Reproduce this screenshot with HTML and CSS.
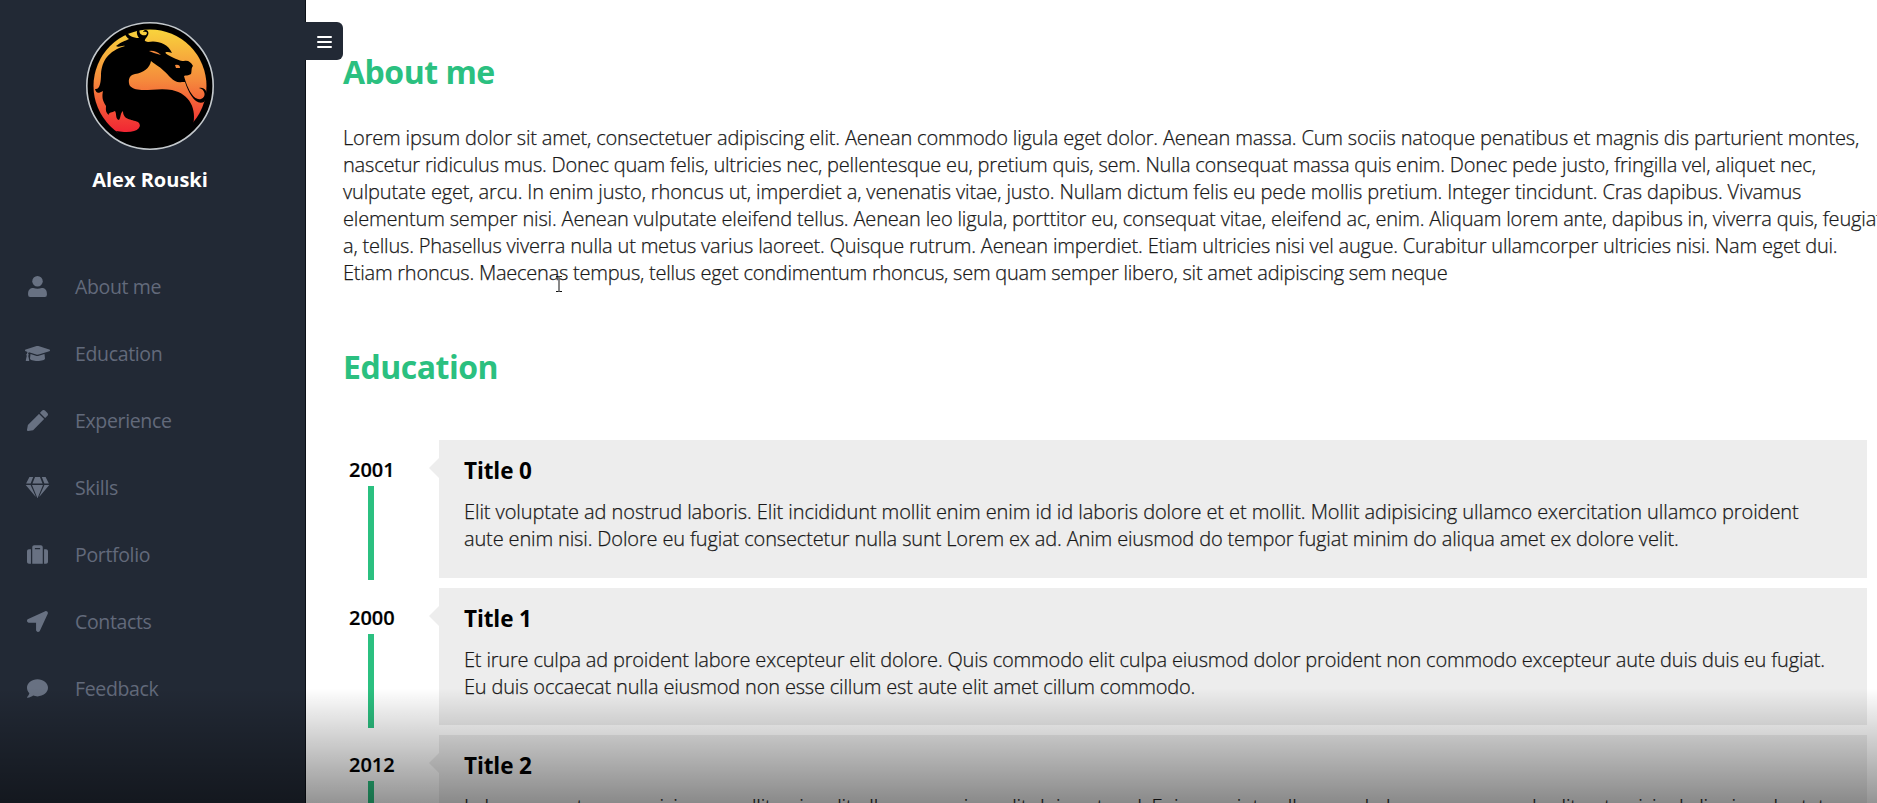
FILE: index.html
```html
<!DOCTYPE html>
<html lang="en">
<head>
<meta charset="utf-8">
<title>Alex Rouski</title>
<link rel="stylesheet" href="styles.css">
</head>
<body>
<div class="page">
  <aside class="sidebar">
    <div class="profile">
      <svg class="avatar" viewBox="0 0 128 128">
        <defs>
          <linearGradient id="fire" x1="0" y1="0" x2="0" y2="1">
            <stop offset="0" stop-color="#f8d43c"/>
            <stop offset=".45" stop-color="#f58a3c"/>
            <stop offset=".8" stop-color="#f23b35"/>
            <stop offset="1" stop-color="#f01432"/>
          </linearGradient>
        </defs>
        <circle cx="64" cy="64" r="63.2" fill="#000" stroke="#c3c8cc" stroke-width="1.6"/>
        <circle cx="64" cy="64" r="56.5" fill="url(#fire)"/>
        <path fill="#000" d="M30 24 C35 20 39 19 43 17 C39 14 38 11 40 8 C42 14 47 16 53 16 C50 12 50 8 54 6 C52 12 56 14 60 13 C62 11 61 9 57 10 C59 6 64 9 62 13 C60 17 56 19 62 20 C70 18 82 21 86 31 C80 29 77 30 82 33 C90 37 94 39 98 39 C102 38 105 40 107 44 C105 46 106 49 105 52 C102 54 100 53 98 54 C101 65 107 79 115 77 C121 75 119 67 113 66 C121 64 123 74 118 80 C110 84 103 72 99 60 L96 60 C88 62 83 53 78 49 C73 44 67 41 65 39 C64 46 57 51 49 52 C42 53 42 60 44 64 C52 72 70 65 86 68 C104 72 111 87 107 104 L114 99 Q96 124 64 122 Q40 120 30 109 L38 110 C52 111 57 104 52 100 C45 97 37 98 37 89 C34 91 35 96 33 98 C29 97 31 92 29 89 C24 91 22 91 23 93 C19 90 20 87 20 84 C16 78 16 74 17 69 C12 72 10 71 9 67 C14 68 15 60 15 52 C16 39 22 29 39 24 C36 23 33 26 30 24Z"/>
        <path fill="#f58a3c" d="M63 29 Q69 28 75 33 L68 31Z M89 43 Q94 42 94 46 L90 46Z"/>
      </svg>
      <div class="name">Alex Rouski</div>
    </div>
    <nav class="menu">
      <a class="item"><svg class="icon" viewBox="0 0 20 20"><circle cx="10" cy="5" r="5"/><path d="M1 17.500C1 13 3 11.500 6 11.500Q10 13 14 11.500C17 11.500 19 13 19 17.500Q19 20 17 20H3Q1 20 1 17.500Z"/></svg><span>About me</span></a>
      <a class="item"><svg class="icon wide" viewBox="0 0 640 512"><path d="M622 153 343 67c-15-5-31-5-46 0L18 153c-24 7-24 40 0 47l49 15c-11 13-17 29-18 47-10 6-17 16-17 28 0 11 6 20 14 26L20 430c-2 9 5 18 15 18h58c10 0 17-9 15-18L82 316c8-6 14-15 14-26 0-12-7-22-16-28 1-15 8-28 21-37l187 58c26 8 48 4 64 0l270-83c24-7 24-40 0-47zM352 313c-35 11-63 3-74 0l-137-42-13 113c0 35 86 64 192 64s192-29 192-64l-13-113z"/></svg><span>Education</span></a>
      <a class="item"><svg class="icon" viewBox="0 0 512 512"><path d="M498 142l-47 47c-5 5-12 5-17 0L323 78c-5-5-5-12 0-17l47-47c19-19 49-19 68 0l60 60c19 19 19 49 0 68zM284 101 22 363 0 484c-3 16 12 31 28 28l121-21 263-263c5-5 5-12 0-17L301 101c-5-5-12-5-17 0z"/></svg><span>Experience</span></a>
      <a class="item"><svg class="icon gem" viewBox="0 0 576 512"><path d="M485 0l81 160H456L393 0zM348 0l63 160H165L228 0zM91 0h92l-63 160H10zM0 192h119l124 279c2 4-3 7-6 4zm154 0h268L292 510c-1 3-7 3-8 0zm179 279 124-279h119L339 475c-3 3-8 0-6-4z"/></svg><span>Skills</span></a>
      <a class="item"><svg class="icon" viewBox="0 0 512 512"><path fill-rule="evenodd" d="M128 480h256V80c0-27-21-48-48-48H176c-27 0-48 21-48 48zm64-384h128v32H192zM512 176v256c0 27-21 48-48 48h-48V128h48c27 0 48 21 48 48zM96 480H48c-27 0-48-21-48-48V176c0-27 21-48 48-48h48z"/></svg><span>Portfolio</span></a>
      <a class="item"><svg class="icon" viewBox="0 0 512 512"><path d="M445 4 29 196c-48 22-32 92 16 92h176v176c0 48 70 64 93 16L506 64c16-38-26-76-61-60z"/></svg><span>Contacts</span></a>
      <a class="item"><svg class="icon" viewBox="0 0 512 512"><path d="M256 32C115 32 0 125 0 240c0 50 21 95 57 131-13 50-54 95-55 95-5 6-1 14 6 14 66 0 116-32 140-51 33 12 69 19 108 19 141 0 256-93 256-208S397 32 256 32z"/></svg><span>Feedback</span></a>
    </nav>
  </aside>
  <button class="toggle" aria-label="Menu"><i></i><i></i><i></i></button>
  <main class="content">
    <h1 class="heading">About me</h1>
    <p class="text about">
      <span class="l1">Lorem ipsum dolor sit amet, consectetuer adipiscing elit. Aenean commodo ligula eget dolor. Aenean massa. Cum sociis natoque penatibus et magnis dis parturient montes,</span><br>
      <span class="l2">nascetur ridiculus mus. Donec quam felis, ultricies nec, pellentesque eu, pretium quis, sem. Nulla consequat massa quis enim. Donec pede justo, fringilla vel, aliquet nec,</span><br>
      <span class="l3">vulputate eget, arcu. In enim justo, rhoncus ut, imperdiet a, venenatis vitae, justo. Nullam dictum felis eu pede mollis pretium. Integer tincidunt. Cras dapibus. Vivamus</span><br>
      <span class="l4">elementum semper nisi. Aenean vulputate eleifend tellus. Aenean leo ligula, porttitor eu, consequat vitae, eleifend ac, enim. Aliquam lorem ante, dapibus in, viverra quis, feugiat</span><br>
      <span class="l5">a, tellus. Phasellus viverra nulla ut metus varius laoreet. Quisque rutrum. Aenean imperdiet. Etiam ultricies nisi vel augue. Curabitur ullamcorper ultricies nisi. Nam eget dui.</span><br>
      <span class="l6">Etiam rhoncus. Maecenas tempus, tellus eget condimentum rhoncus, sem quam semper libero, sit amet adipiscing sem neque</span>
    </p>
    <h1 class="heading education">Education</h1>
    <section class="timeline">
      <div class="entry">
        <div class="when"><b>2001</b><i class="bar"></i></div>
        <article class="card"><h2>Title 0</h2><p class="text"><span class="c1">Elit voluptate ad nostrud laboris. Elit incididunt mollit enim enim id id laboris dolore et et mollit. Mollit adipisicing ullamco exercitation ullamco proident</span><br><span class="c2">aute enim nisi. Dolore eu fugiat consectetur nulla sunt Lorem ex ad. Anim eiusmod do tempor fugiat minim do aliqua amet ex dolore velit.</span></p></article>
      </div>
      <div class="entry">
        <div class="when"><b>2000</b><i class="bar"></i></div>
        <article class="card"><h2>Title 1</h2><p class="text"><span class="c3">Et irure culpa ad proident labore excepteur elit dolore. Quis commodo elit culpa eiusmod dolor proident non commodo excepteur aute duis duis eu fugiat.</span><br><span class="c4">Eu duis occaecat nulla eiusmod non esse cillum est aute elit amet cillum commodo.</span></p></article>
      </div>
      <div class="entry">
        <div class="when"><b>2012</b><i class="bar"></i></div>
        <article class="card"><h2>Title 2</h2><p class="text"><span class="c5">Labore esse tempor nisi non mollit enim elit ullamco veniam elit duis aute ad. Enim ea sint nulla esse do Lorem magna ad velit aute nisi ad aliquip voluptate</span></p></article>
      </div>
    </section>
  </main>
  <div class="shade"></div>
  <svg class="cursor" viewBox="0 0 8 18"><path d="M1 1.500H3.500L4 2 4.500 1.500H7M4 2V16M1 16.500H3.500L4 16 4.500 16.500H7"/></svg>
</div>
</body>
</html>
```
FILE: styles.css
```css
* { box-sizing: border-box; }
body { margin: 0; font-family: "Open Sans", "Noto Sans", sans-serif; color: #181818; background: #fff; }
.page { position: relative; display: flex; width: 1877px; height: 803px; overflow: hidden; }
.sidebar { flex: none; width: 306px; height: 803px; background: #222935; border-right: 1px solid #0b0f16; }
.profile { display: flex; flex-direction: column; align-items: center; width: 300px; padding-top: 22px; }
.avatar { width: 128px; height: 128px; display: block; }
.name { margin-top: 15px; font-size: 20px; line-height: 30px; font-weight: 700; color: #fff; }
.menu { padding: 58px 0 0 25px; }
.item { display: flex; align-items: center; height: 67px; gap: 25px; color: #626a7b; font-size: 19.5px; letter-spacing: -.35px; }
.item svg { flex: none; width: 25px; height: 21px; fill: #687182; }
.toggle { position: absolute; left: 305px; top: 22px; width: 38px; height: 38px; padding: 2px 11px 0 12px; border: 0; border-radius: 0 6px 6px 0; background: #222935; display: flex; flex-direction: column; justify-content: center; gap: 3px; }
.toggle i { height: 2px; width: 15px; background: #fff; border-radius: 1px; }
.content { flex: none; width: 1571px; padding: 48px 10px 0 37px; }
.heading { margin: 0; font-size: 32px; line-height: 48px; font-weight: 700; letter-spacing: -.5px; color: #2bc080; }
.text { margin: 0; font-size: 20px; line-height: 27px; font-weight: 300; white-space: nowrap; -webkit-text-stroke: .25px #181818; }
.l1 { letter-spacing: -.172px; }
.l2 { letter-spacing: -.197px; }
.l3 { letter-spacing: -.148px; }
.l4 { letter-spacing: -.163px; }
.l5 { letter-spacing: -.195px; }
.l6 { letter-spacing: -.235px; }
.c1 { letter-spacing: -.08px; }
.c2 { letter-spacing: -.14px; }
.c3, .c4 { letter-spacing: -.18px; }
.c5 { letter-spacing: -.12px; }
.about { margin-top: 28px; }
.education { margin-top: 57px; }
.timeline { display: flex; flex-direction: column; gap: 10px; margin-top: 49px; }
.entry { display: flex; height: 137.6px; }
.when { width: 96px; padding: 17px 0 0 6px; }
.when b { display: block; font-size: 20px; line-height: 26px; font-weight: 600; color: #000; -webkit-text-stroke: .2px #000; }
.bar { display: block; width: 6px; height: 94px; margin: 3px 0 0 19px; background: #2bc080; }
.card { position: relative; width: 1428px; padding: 17px 0 0 25px; background: #ededed; }
.card::before { content: ""; position: absolute; left: -10px; top: 18px; border: 10px solid transparent; border-left: 0; border-right-color: #ededed; }
.card h2 { margin: 0 0 13px; font-size: 22.5px; line-height: 28px; font-weight: 700; letter-spacing: -.1px; color: #000; }
.shade { position: absolute; left: 0; right: 0; bottom: 0; height: 115px; background: linear-gradient(rgba(0,0,0,0), rgba(0,0,0,.42)); }
.cursor { position: absolute; left: 555px; top: 275px; width: 8px; height: 18px; fill: none; stroke: #111; stroke-width: 1; }
```
